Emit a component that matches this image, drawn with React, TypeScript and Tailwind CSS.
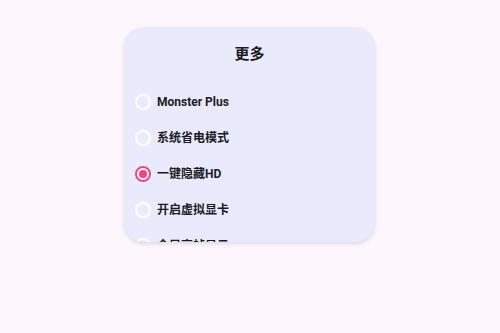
import { useState } from 'react';

const options = ['Monster Plus', '系统省电模式', '一键隐藏HD', '开启虚拟显卡', '全局高帧显示'];

const Radio = ({ checked }: { checked: boolean }) =>
  checked ? (
    <span className="flex h-4 w-4 shrink-0 items-center justify-center rounded-full border-2 border-[#f2457c] bg-white">
      <span className="h-2 w-2 rounded-full bg-[#f2457c]" />
    </span>
  ) : (
    <span className="h-4 w-4 shrink-0 rounded-full border-2 border-white" />
  );

export default function App() {
  const [selected, setSelected] = useState(2);

  return (
    <div
      className="h-[333px] w-[500px] bg-[#fdf7fd] pt-[27px]"
      style={{ fontFamily: 'Roboto, "Noto Sans CJK SC", sans-serif' }}
    >
      <div className="ml-[124px] h-[215px] w-[251px] overflow-hidden rounded-[20px] bg-[#e9ebfc] shadow-[0_2px_4px_rgba(0,0,0,0.12)]">
        <h2 className="pt-[17px] text-center text-[15px] leading-5 font-semibold text-[#1b1b1f]">更多</h2>
        <ul className="mt-[20px]">
          {options.map((label, i) => (
            <li
              key={label}
              className="flex h-9 cursor-pointer items-center gap-[6px] pl-[11px]"
              onClick={() => setSelected(i)}
            >
              <Radio checked={selected === i} />
              <span className="text-[12px] font-bold text-[#1b1b1f]">{label}</span>
            </li>
          ))}
        </ul>
      </div>
    </div>
  );
}
